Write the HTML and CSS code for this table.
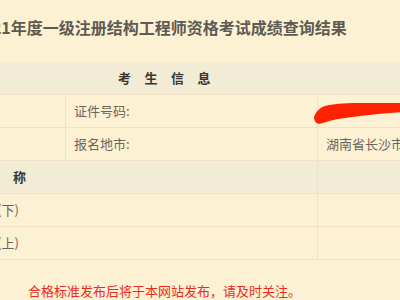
FILE: index.html
```html
<!DOCTYPE html>
<html lang="zh-CN">
<head>
<meta charset="utf-8">
<link rel="stylesheet" href="styles.css">
</head>
<body>
<div class="page">
  <h1 class="title">2021年度一级注册结构工程师资格考试成绩查询结果</h1>
  <table class="grid">
    <colgroup><col class="c1"><col class="c2"><col class="c3"></colgroup>
    <tr class="band"><th colspan="3" class="band-title">考生信息</th></tr>
    <tr><td></td><td class="label">证件号码:</td><td class="value id-cell"><span class="mask"><svg width="92" height="23" viewBox="0 0 92 23"><path d="M1 15 C3 10 6 6 12 4 C20 2 30 1 45 1 L92 1 L92 10 C72 11 56 13 40 15 C28 16 18 18 10 21 C5 23 1 21 1 15 Z" fill="#ff2200"/></svg></span></td></tr>
    <tr><td></td><td class="label">报名地市:</td><td class="value">湖南省长沙市</td></tr>
    <tr class="band"><th colspan="2" class="subject-head">科目名称</th><th></th></tr>
    <tr><td colspan="2" class="subject">基础考试(下)</td><td></td></tr>
    <tr><td colspan="2" class="subject">基础考试(上)</td><td></td></tr>
  </table>
  <p class="notice">合格标准发布后将于本网站发布，请及时关注。</p>
</div>
</body>
</html>
```
FILE: styles.css
```css
html, body {
  margin: 0;
  padding: 0;
  background: #fdf1d4;
  overflow: hidden;
}
body {
  font-family: "Noto Sans CJK SC", "Noto Sans", sans-serif;
  width: 400px;
  height: 300px;
}
.page {
  margin-left: -64px;
  width: 600px;
}
.title {
  margin: 0;
  height: 62px;
  box-sizing: border-box;
  padding: 15px 0 0 37px;
  font-size: 16px;
  line-height: 24px;
  font-weight: bold;
  color: #5e5a52;
  white-space: nowrap;
}
.grid {
  border-collapse: collapse;
  width: 580px;
  table-layout: fixed;
}
.c1 { width: 129px; }
.c2 { width: 252px; }
.c3 { width: 199px; }
.grid td, .grid th {
  border: 1px solid #f2dfc4;
  height: 33px;
  padding: 0 0 0 8px;
  font-size: 13px;
  line-height: 18px;
  color: #6b665d;
  text-align: left;
  white-space: nowrap;
  box-sizing: border-box;
}
.grid tr:first-child th { border-top: none; }
.band th {
  background: #f2ebd6;
  color: #3a3630;
  font-weight: bold;
}
.band .band-title {
  height: 32px;
  text-align: left;
  padding-left: 181px;
  letter-spacing: 13.5px;
}
.subject-head {
  padding-left: 0 !important;
  letter-spacing: 13px;
  text-indent: -2px;
}
.id-cell {
  position: relative;
}
.mask {
  position: absolute;
  left: -5px;
  top: 7px;
  line-height: 0;
}
.notice {
  margin: 22px 0 0 92px;
  font-size: 13px;
  line-height: 18px;
  color: #ee2a1c;
  white-space: nowrap;
}
```
